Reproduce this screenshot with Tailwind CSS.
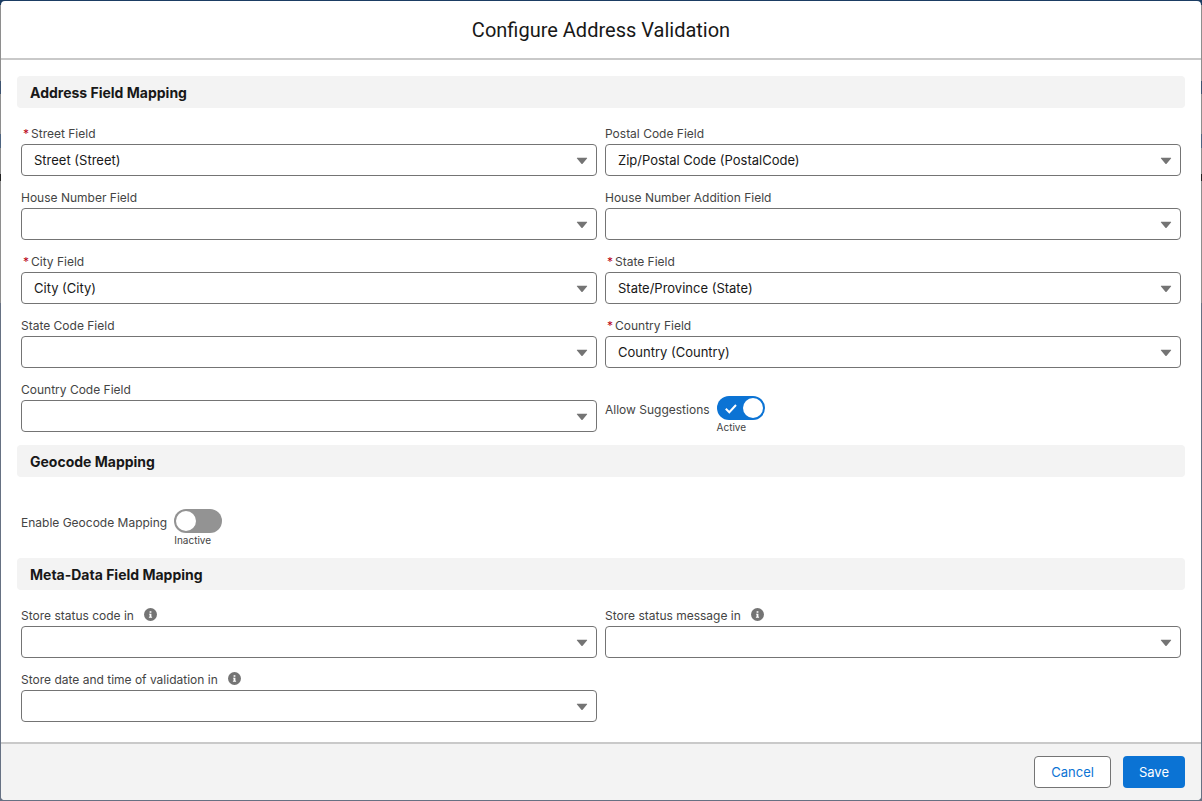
<!DOCTYPE html>
<html lang="en">
<head>
  <meta charset="UTF-8" />
  <meta name="viewport" content="width=device-width, initial-scale=1" />
  <title>Configure Address Validation</title>
  <script src="https://cdn.jsdelivr.net/npm/@tailwindcss/browser@4"></script>
</head>
<body class="min-h-screen flex flex-col p-px font-[Inter,sans-serif] text-[12px] text-[#444444] bg-[linear-gradient(#1b3d63_0_5px,#8e8e8e_5px_81px,#3d5370_81px_94px,#8e8e8e_94px_134px,#4d6480_134px_148px,#8e8e8e_148px_174px,#222222_174px_181px,#8e8e8e_181px_303px,#667183_303px)]">

  <!-- shared icons -->
  <svg class="hidden">
    <symbol id="arrow" viewBox="0 0 12 8"><path d="M1.300 .8h9.400c.5 0 .6.400.3.700L6.600 6.700a.8.8 0 0 1-1.200 0L1 1.500C.7 1.200.8.8 1.300.8z" /></symbol>
    <symbol id="info" viewBox="0 0 13 13">
      <circle cx="6.500" cy="6.500" r="6.500" fill="#747474" />
      <path fill="#fff" d="M5.600 3.200h1.800v1.600H5.600zM5 5.700h2.400v3.100h.7v.9H4.900v-.9h.7V6.600H5z" />
    </symbol>
  </svg>

  <main class="flex-1 flex flex-col bg-white rounded overflow-hidden">
    <!-- Header -->
    <header class="h-[59px] flex items-center justify-center border-b-2 border-[#c9c9c9]">
      <h1 class="font-[Roboto,sans-serif] text-[20px] text-[#181818]">Configure Address Validation</h1>
    </header>

    <form id="config" class="flex-1 p-4">
      <!-- Address fields -->
      <h2 class="h-8 px-[13px] flex items-center rounded bg-[#f3f3f3] text-[14px] font-bold text-[#181818]">Address Field Mapping</h2>
      <div class="grid grid-cols-2 gap-x-2 gap-y-3 px-1 pt-4 pb-[11px]">
        <div>
          <label for="street" class="flex gap-0.5 h-5 leading-5 pl-0.5"><span class="text-[#ba0517]">*</span>Street Field</label>
          <div class="relative">
            <select id="street" class="block w-full h-8 px-3 pt-px appearance-none border border-[#747474] rounded bg-white text-[13px] text-[#181818]"><option>Street (Street)</option></select>
            <svg class="absolute right-[9px] top-[13px] w-3 h-2 pointer-events-none fill-[#747474]"><use href="#arrow" /></svg>
          </div>
        </div>
        <div>
          <label for="postal" class="flex h-5 leading-5">Postal Code Field</label>
          <div class="relative">
            <select id="postal" class="block w-full h-8 px-3 pt-px appearance-none border border-[#747474] rounded bg-white text-[13px] text-[#181818]"><option>Zip/Postal Code (PostalCode)</option></select>
            <svg class="absolute right-[9px] top-[13px] w-3 h-2 pointer-events-none fill-[#747474]"><use href="#arrow" /></svg>
          </div>
        </div>
        <div>
          <label for="house" class="flex h-5 leading-5">House Number Field</label>
          <div class="relative">
            <select id="house" class="block w-full h-8 px-3 pt-px appearance-none border border-[#747474] rounded bg-white text-[13px] text-[#181818]"><option></option></select>
            <svg class="absolute right-[9px] top-[13px] w-3 h-2 pointer-events-none fill-[#747474]"><use href="#arrow" /></svg>
          </div>
        </div>
        <div>
          <label for="houseAddition" class="flex h-5 leading-5">House Number Addition Field</label>
          <div class="relative">
            <select id="houseAddition" class="block w-full h-8 px-3 pt-px appearance-none border border-[#747474] rounded bg-white text-[13px] text-[#181818]"><option></option></select>
            <svg class="absolute right-[9px] top-[13px] w-3 h-2 pointer-events-none fill-[#747474]"><use href="#arrow" /></svg>
          </div>
        </div>
        <div>
          <label for="city" class="flex gap-0.5 h-5 leading-5 pl-0.5"><span class="text-[#ba0517]">*</span>City Field</label>
          <div class="relative">
            <select id="city" class="block w-full h-8 px-3 pt-px appearance-none border border-[#747474] rounded bg-white text-[13px] text-[#181818]"><option>City (City)</option></select>
            <svg class="absolute right-[9px] top-[13px] w-3 h-2 pointer-events-none fill-[#747474]"><use href="#arrow" /></svg>
          </div>
        </div>
        <div>
          <label for="state" class="flex gap-0.5 h-5 leading-5 pl-0.5"><span class="text-[#ba0517]">*</span>State Field</label>
          <div class="relative">
            <select id="state" class="block w-full h-8 px-3 pt-px appearance-none border border-[#747474] rounded bg-white text-[13px] text-[#181818]"><option>State/Province (State)</option></select>
            <svg class="absolute right-[9px] top-[13px] w-3 h-2 pointer-events-none fill-[#747474]"><use href="#arrow" /></svg>
          </div>
        </div>
        <div>
          <label for="stateCode" class="flex h-5 leading-5">State Code Field</label>
          <div class="relative">
            <select id="stateCode" class="block w-full h-8 px-3 pt-px appearance-none border border-[#747474] rounded bg-white text-[13px] text-[#181818]"><option></option></select>
            <svg class="absolute right-[9px] top-[13px] w-3 h-2 pointer-events-none fill-[#747474]"><use href="#arrow" /></svg>
          </div>
        </div>
        <div>
          <label for="country" class="flex gap-0.5 h-5 leading-5 pl-0.5"><span class="text-[#ba0517]">*</span>Country Field</label>
          <div class="relative">
            <select id="country" class="block w-full h-8 px-3 pt-px appearance-none border border-[#747474] rounded bg-white text-[13px] text-[#181818]"><option>Country (Country)</option></select>
            <svg class="absolute right-[9px] top-[13px] w-3 h-2 pointer-events-none fill-[#747474]"><use href="#arrow" /></svg>
          </div>
        </div>
        <div>
          <label for="countryCode" class="flex h-5 leading-5">Country Code Field</label>
          <div class="relative">
            <select id="countryCode" class="block w-full h-8 px-3 pt-px appearance-none border border-[#747474] rounded bg-white text-[13px] text-[#181818]"><option></option></select>
            <svg class="absolute right-[9px] top-[13px] w-3 h-2 pointer-events-none fill-[#747474]"><use href="#arrow" /></svg>
          </div>
        </div>
        <div class="flex gap-[7px] pt-4">
          <label for="suggestions" class="pt-1 leading-5">Allow Suggestions</label>
          <div>
            <div class="relative">
              <input type="checkbox" id="suggestions" checked class="peer block w-12 h-6 p-0.5 appearance-none rounded-full bg-[#939393] checked:bg-[#0b73d4] before:block before:size-5 before:rounded-full before:bg-white checked:before:ml-6" />
              <svg class="absolute left-2 top-2 w-3 h-[10px] pointer-events-none hidden peer-checked:block" viewBox="0 0 12 10" fill="none" stroke="#fff" stroke-width="2"><path d="M.8 4.800 4.300 8.200 11 1" /></svg>
            </div>
            <p class="text-[10px] leading-[14px]">Active</p>
          </div>
        </div>
      </div>

      <!-- Geocode -->
      <h2 class="h-8 px-[13px] flex items-center rounded bg-[#f3f3f3] text-[14px] font-bold text-[#181818]">Geocode Mapping</h2>
      <div class="flex gap-[7px] px-1 pt-8 pb-[11px]">
        <label for="geocode" class="pt-1 leading-5">Enable Geocode Mapping</label>
        <div>
          <input type="checkbox" id="geocode" class="block w-12 h-6 p-0.5 appearance-none rounded-full bg-[#939393] checked:bg-[#0b73d4] before:block before:size-5 before:rounded-full before:bg-white checked:before:ml-6" />
          <p class="text-[10px] leading-[14px]">Inactive</p>
        </div>
      </div>

      <!-- Meta-data fields -->
      <h2 class="h-8 px-[13px] flex items-center rounded bg-[#f3f3f3] text-[14px] font-bold text-[#181818]">Meta-Data Field Mapping</h2>
      <div class="grid grid-cols-2 gap-x-2 gap-y-3 px-1 pt-4 pb-1">
        <div>
          <div class="flex gap-[10px] h-5">
            <label for="statusCode" class="leading-5">Store status code in</label>
            <button type="button" aria-label="Help" class="pb-[3px]"><svg class="size-[13px]"><use href="#info" /></svg></button>
          </div>
          <div class="relative">
            <select id="statusCode" class="block w-full h-8 px-3 pt-px appearance-none border border-[#747474] rounded bg-white text-[13px] text-[#181818]"><option></option></select>
            <svg class="absolute right-[9px] top-[13px] w-3 h-2 pointer-events-none fill-[#747474]"><use href="#arrow" /></svg>
          </div>
        </div>
        <div>
          <div class="flex gap-[10px] h-5">
            <label for="statusMessage" class="leading-5">Store status message in</label>
            <button type="button" aria-label="Help" class="pb-[3px]"><svg class="size-[13px]"><use href="#info" /></svg></button>
          </div>
          <div class="relative">
            <select id="statusMessage" class="block w-full h-8 px-3 pt-px appearance-none border border-[#747474] rounded bg-white text-[13px] text-[#181818]"><option></option></select>
            <svg class="absolute right-[9px] top-[13px] w-3 h-2 pointer-events-none fill-[#747474]"><use href="#arrow" /></svg>
          </div>
        </div>
        <div>
          <div class="flex gap-[10px] h-5">
            <label for="validatedAt" class="leading-5">Store date and time of validation in</label>
            <button type="button" aria-label="Help" class="pb-[3px]"><svg class="size-[13px]"><use href="#info" /></svg></button>
          </div>
          <div class="relative">
            <select id="validatedAt" class="block w-full h-8 px-3 pt-px appearance-none border border-[#747474] rounded bg-white text-[13px] text-[#181818]"><option></option></select>
            <svg class="absolute right-[9px] top-[13px] w-3 h-2 pointer-events-none fill-[#747474]"><use href="#arrow" /></svg>
          </div>
        </div>
      </div>
    </form>

    <!-- Footer -->
    <footer class="flex justify-end gap-3 px-4 py-3 border-t-2 border-[#c9c9c9] bg-[#f3f3f3] text-[13px]">
      <button type="button" class="h-8 px-4 pt-px rounded border border-[#747474] bg-white text-[#0b73d4]">Cancel</button>
      <button type="submit" form="config" class="h-8 px-4 pt-px rounded bg-[#0b73d4] text-white">Save</button>
    </footer>
  </main>

</body>
</html>
